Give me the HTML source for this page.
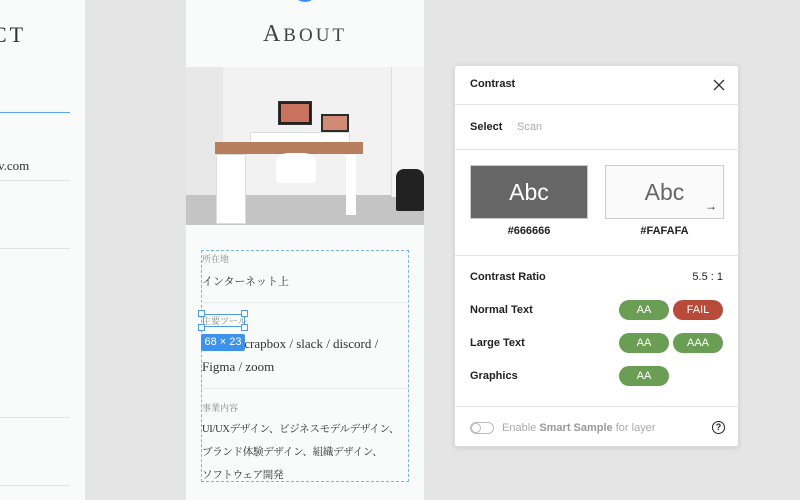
<!DOCTYPE html>
<html><head><meta charset="utf-8"><style>
*{margin:0;padding:0;box-sizing:border-box}
body{width:800px;height:500px;overflow:hidden;background:#e5e5e5;position:relative;font-family:"Liberation Sans","Noto Sans CJK JP",sans-serif}
.a{position:absolute}
.serif{font-family:"Liberation Serif","Noto Serif CJK JP",serif}
.hl{position:absolute;height:1px;background:#e2e2e2}
.pill{position:absolute;width:50px;height:20px;border-radius:10px;background:#6a9e55;color:#fff;font-size:11px;text-align:center;line-height:20px}
.lbl{position:absolute;left:15px;font-size:11px;font-weight:bold;color:#222}
.h{position:absolute;width:7px;height:7px;border:1px solid #4a9cf0;background:#fff}
</style></head><body>
<div class="a" style="left:0;top:0;width:85px;height:500px;background:#f9fafa"></div>
<div class="a serif" style="left:-8px;top:22px;font-size:22px;letter-spacing:3px;color:#333">CT</div>
<div class="a" style="left:0;top:112px;width:70px;height:1px;background:#5aa6ee"></div>
<div class="a serif" style="left:-2px;top:158px;font-size:13px;color:#333">v.com</div>
<div class="hl" style="left:0;top:180px;width:70px"></div>
<div class="hl" style="left:0;top:248px;width:70px"></div>
<div class="hl" style="left:0;top:417px;width:70px"></div>
<div class="hl" style="left:0;top:485px;width:70px"></div>
<div class="a" style="left:186px;top:0;width:238px;height:500px;background:#f9fafa"></div>
<div class="a" style="left:293px;top:-10px;width:24px;height:12px;border-radius:0 0 12px 12px;background:#3d8ef0"></div>
<div class="a serif" style="left:186px;top:21px;width:238px;text-align:center;font-size:24px;letter-spacing:3px;color:#444">A<span style="font-size:19px">BOUT</span></div>
<div class="a" style="left:186px;top:67px;width:238px;height:158px;background:#f2f2f2;overflow:hidden">
 <div class="a" style="left:0;top:0;width:37px;height:158px;background:#e8e8e8"></div>
 <div class="a" style="left:0;top:128px;width:238px;height:30px;background:#c4c4c4"></div>
 <div class="a" style="left:205px;top:0;width:33px;height:130px;background:#f5f5f5;border-left:1px solid #ddd"></div>
 <div class="a" style="left:92px;top:34px;width:34px;height:24px;background:#222;border:1px solid #333"><div style="margin:2px;height:18px;background:#c9725e"></div></div>
 <div class="a" style="left:135px;top:47px;width:28px;height:20px;background:#2b2b2b"><div style="margin:2px;height:14px;background:#d08a76"></div></div>
 <div class="a" style="left:64px;top:65px;width:100px;height:12px;background:#fff;border:1px solid #ddd"></div>
 <div class="a" style="left:29px;top:75px;width:148px;height:12px;background:#b57e5c"></div>
 <div class="a" style="left:30px;top:87px;width:30px;height:70px;background:#fff;border:1px solid #ddd"></div>
 <div class="a" style="left:90px;top:86px;width:40px;height:30px;background:#fff;border-radius:12px 12px 4px 4px"></div>
 <div class="a" style="left:210px;top:102px;width:28px;height:42px;background:#222;border-radius:8px 8px 2px 2px"></div>
 <div class="a" style="left:160px;top:88px;width:10px;height:60px;background:#fff"></div>
</div>
<div class="a" style="left:201px;top:250px;width:208px;height:232px;border:1px dashed #7ab4ee"></div>
<div class="a serif" style="left:202px;top:252px;font-size:9px;color:#888">所在地</div>
<div class="a serif" style="left:202px;top:273px;font-size:11px;color:#333">インターネット上</div>
<div class="hl" style="left:201px;top:302px;width:208px;background:#e8e8e8"></div>
<div class="a serif" style="left:202px;top:314px;font-size:9px;color:#888">主要ツール</div>
<div class="a" style="left:203px;top:314px;width:42px;height:13px;border:1px solid #4a9cf0"></div>
<div class="h" style="left:198px;top:310px"></div><div class="h" style="left:241px;top:310px"></div>
<div class="h" style="left:198px;top:324px"></div><div class="h" style="left:241px;top:324px"></div>
<div class="a serif" style="left:202px;top:332px;font-size:13px;color:#333;line-height:23px">&nbsp;&nbsp;&nbsp;&nbsp;&nbsp;&nbsp;&nbsp;&nbsp;&nbsp;&nbsp;&nbsp;&nbsp;&nbsp;crapbox / slack / discord /<br>Figma / zoom</div>
<div class="a" style="left:201px;top:334px;width:44px;height:17px;background:#3d92ee;border-radius:2px;color:#fff;font-size:11px;text-align:center;line-height:17px">68 × 23</div>
<div class="hl" style="left:201px;top:388px;width:208px;background:#e8e8e8"></div>
<div class="a serif" style="left:202px;top:401px;font-size:9px;color:#888">事業内容</div>
<div class="a serif" style="left:202px;top:418px;font-size:10.5px;color:#333;line-height:23px;letter-spacing:-0.3px">UI/UXデザイン、ビジネスモデルデザイン、<br>ブランド体験デザイン、組織デザイン、<br>ソフトウェア開発</div>
<div class="a" style="left:454px;top:65px;width:285px;height:382px;background:#fff;border:1px solid #dcdcdc;border-radius:3px;box-shadow:0 1px 4px rgba(0,0,0,.12)">
 <div class="lbl" style="top:12px">Contrast</div>
 <svg class="a" style="left:258px;top:13px" width="12" height="12"><path d="M1 1L11 11M11 1L1 11" stroke="#333" stroke-width="1.3"/></svg>
 <div class="hl" style="left:0;top:38px;width:285px"></div>
 <div class="lbl" style="top:55px">Select</div>
 <div class="a" style="left:62px;top:55px;font-size:11px;color:#aaa">Scan</div>
 <div class="hl" style="left:0;top:83px;width:285px"></div>
 <div class="a" style="left:15px;top:99px;width:118px;height:54px;background:#666;border:1px solid #ccc;color:#fff;font-size:23px;text-align:center;line-height:52px">Abc</div>
 <div class="a" style="left:150px;top:99px;width:119px;height:54px;background:#fafafa;border:1px solid #ccc;color:#666;font-size:23px;text-align:center;line-height:52px">Abc</div>
 <div class="a" style="left:250px;top:133px;font-size:12px;color:#222">→</div>
 <div class="a" style="left:15px;top:159px;width:118px;text-align:center;font-size:11px;font-weight:bold;color:#222">#666666</div>
 <div class="a" style="left:150px;top:159px;width:119px;text-align:center;font-size:11px;font-weight:bold;color:#222">#FAFAFA</div>
 <div class="hl" style="left:0;top:189px;width:285px"></div>
 <div class="lbl" style="top:205px">Contrast Ratio</div>
 <div class="a" style="right:15px;top:205px;font-size:11px;color:#222">5.5 : 1</div>
 <div class="lbl" style="top:238px">Normal Text</div>
 <div class="pill" style="left:164px;top:234px">AA</div>
 <div class="pill" style="left:218px;top:234px;background:#b84a3a">FAIL</div>
 <div class="lbl" style="top:271px">Large Text</div>
 <div class="pill" style="left:164px;top:267px">AA</div>
 <div class="pill" style="left:218px;top:267px">AAA</div>
 <div class="lbl" style="top:304px">Graphics</div>
 <div class="pill" style="left:164px;top:300px">AA</div>
 <div class="hl" style="left:0;top:340px;width:285px"></div>
 <div class="a" style="left:15px;top:356px;width:24px;height:12px;border:1px solid #bbb;border-radius:6px"><div style="width:10px;height:10px;border-radius:5px;border:1px solid #bbb"></div></div>
 <div class="a" style="left:47px;top:356px;font-size:11px;color:#aaa">Enable <b style="color:#999">Smart Sample</b> for layer</div>
 <div class="a" style="left:257px;top:355px;width:13px;height:13px;border:1.3px solid #222;border-radius:50%;font-size:9px;font-weight:bold;text-align:center;line-height:11px;color:#222">?</div>
</div>
</body></html>
